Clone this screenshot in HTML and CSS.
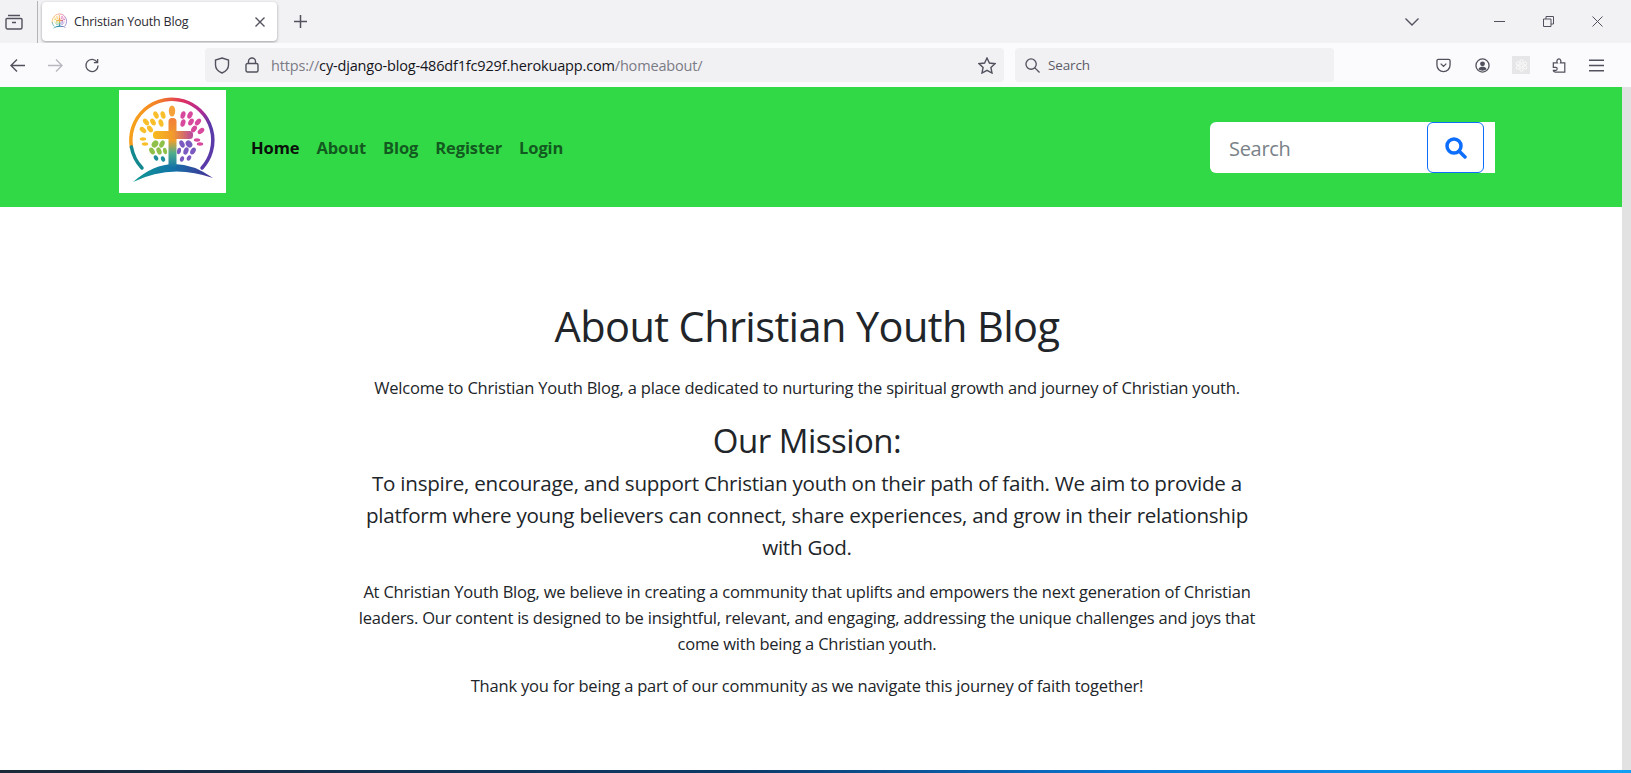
FILE: index.html
```html
<!DOCTYPE html>
<html lang="en">
<head>
  <meta charset="UTF-8" />
  <title>Christian Youth Blog</title>
  <link rel="stylesheet" href="styles.css">
</head>
<body>

  <!-- shared logo, used by the tab favicon and the navbar -->
  <svg class="defs" aria-hidden="true">
    <defs>
      <linearGradient id="ring" x1="0" y1="0" x2="1" y2="0.25">
        <stop offset="0" stop-color="#f8b514"/>
        <stop offset="0.35" stop-color="#f2792a"/>
        <stop offset="0.6" stop-color="#dd2f62"/>
        <stop offset="0.85" stop-color="#b02a95"/>
        <stop offset="1" stop-color="#5a3aa8"/>
      </linearGradient>
      <linearGradient id="ground" x1="0" y1="0" x2="1" y2="0">
        <stop offset="0" stop-color="#109a92"/>
        <stop offset="0.5" stop-color="#1272a8"/>
        <stop offset="1" stop-color="#4a2c96"/>
      </linearGradient>
      <linearGradient id="crossV" x1="0" y1="0" x2="0" y2="1">
        <stop offset="0" stop-color="#f2803a"/>
        <stop offset="0.45" stop-color="#f0a02c"/>
        <stop offset="0.7" stop-color="#4fae8a"/>
        <stop offset="1" stop-color="#1272a8"/>
      </linearGradient>
      <linearGradient id="crossH" x1="0" y1="0" x2="1" y2="0">
        <stop offset="0" stop-color="#f7bb1e"/>
        <stop offset="0.5" stop-color="#f29a2c"/>
        <stop offset="1" stop-color="#b8479f"/>
      </linearGradient>
      <symbol id="logo" viewBox="0 0 107 103">
        <path class="ring" d="M12.400 57A41 41 0 1 1 83 78"/>
        <path class="ring-low" d="M23 78A41 41 0 0 1 12.400 57"/>
        <path fill="url(#ground)" d="M14 92Q52 58 94 88Q52 73 14 92Z"/>
        <ellipse cx="53" cy="21" rx="3.200" ry="5.500" fill="#f6a23a"/>
        <g fill="#f9bf2a">
          <ellipse cx="37" cy="25" rx="2.400" ry="3.800" transform="rotate(-25 37 25)"/>
          <ellipse cx="44" cy="25" rx="2.400" ry="3.800" transform="rotate(-15 44 25)"/>
          <ellipse cx="27" cy="32" rx="2.400" ry="3.800" transform="rotate(-40 27 32)"/>
          <ellipse cx="34" cy="32" rx="2.400" ry="3.800" transform="rotate(-30 34 32)"/>
          <ellipse cx="42" cy="33" rx="2.400" ry="3.800" transform="rotate(-15 42 33)"/>
          <ellipse cx="24" cy="40" rx="2.400" ry="3.800" transform="rotate(-50 24 40)"/>
          <ellipse cx="31" cy="39" rx="2.400" ry="3.800" transform="rotate(-35 31 39)"/>
          <ellipse cx="24" cy="49" rx="3.200" ry="1.700"/>
          <ellipse cx="26" cy="54" rx="3.200" ry="1.700"/>
        </g>
        <g fill="#d8489c">
          <ellipse cx="64" cy="25" rx="2.400" ry="3.800" transform="rotate(15 64 25)"/>
          <ellipse cx="71" cy="25" rx="2.400" ry="3.800" transform="rotate(25 71 25)"/>
          <ellipse cx="64" cy="33" rx="2.400" ry="3.800" transform="rotate(15 64 33)"/>
          <ellipse cx="72" cy="32" rx="2.400" ry="3.800" transform="rotate(30 72 32)"/>
          <ellipse cx="79" cy="32" rx="2.400" ry="3.800" transform="rotate(40 79 32)"/>
          <ellipse cx="75" cy="39" rx="2.400" ry="3.800" transform="rotate(35 75 39)"/>
          <ellipse cx="82" cy="41" rx="2.400" ry="3.800" transform="rotate(50 82 41)"/>
          <ellipse cx="78" cy="50" rx="3.200" ry="1.700"/>
          <ellipse cx="81" cy="54" rx="3.200" ry="1.700"/>
        </g>
        <g fill="#8fc04a">
          <ellipse cx="36" cy="54" rx="3" ry="3.800" transform="rotate(40 36 54)"/>
          <ellipse cx="43" cy="54" rx="2.400" ry="3.800" transform="rotate(25 43 54)"/>
          <ellipse cx="33" cy="61" rx="2.400" ry="3.800" transform="rotate(-30 33 61)"/>
          <ellipse cx="40" cy="61" rx="2.400" ry="3.800" transform="rotate(-20 40 61)"/>
          <ellipse cx="46" cy="61" rx="2" ry="3.200" transform="rotate(-10 46 61)"/>
        </g>
        <g fill="#1d8e9a">
          <ellipse cx="37" cy="68" rx="2" ry="2.800" transform="rotate(-30 37 68)"/>
          <ellipse cx="44" cy="69" rx="2" ry="2.800" transform="rotate(-20 44 69)"/>
        </g>
        <g fill="#7a5ac0">
          <ellipse cx="63" cy="54" rx="2.400" ry="3.800" transform="rotate(-25 63 54)"/>
          <ellipse cx="70" cy="54" rx="3" ry="3.800" transform="rotate(-40 70 54)"/>
          <ellipse cx="60" cy="61" rx="2" ry="3.200" transform="rotate(10 60 61)"/>
          <ellipse cx="67" cy="61" rx="2.400" ry="3.800" transform="rotate(20 67 61)"/>
          <ellipse cx="74" cy="61" rx="2.400" ry="3.800" transform="rotate(30 74 61)"/>
          <ellipse cx="63" cy="69" rx="2" ry="2.800" transform="rotate(20 63 69)"/>
          <ellipse cx="70" cy="68" rx="2" ry="2.800" transform="rotate(30 70 68)"/>
        </g>
        <rect x="49.500" y="28" width="8" height="50" rx="3.500" fill="url(#crossV)"/>
        <rect x="34" y="41" width="40" height="8" rx="3.500" fill="url(#crossH)"/>
      </symbol>
    </defs>
  </svg>

  <div class="tabbar">
    <svg class="ico tabs-ico" viewBox="0 0 18 16"><path d="M3 1.500h12M2 4.500h14a1 1 0 0 1 1 1v8a1.500 1.500 0 0 1-1.500 1.500h-13A1.500 1.500 0 0 1 1 13.500v-8a1 1 0 0 1 1-1zM7 8.500h4"/></svg>
    <div class="tab-sep"></div>
    <div class="tab">
      <svg class="favicon"><use href="#logo"/></svg>
      <span class="tab-title">Christian Youth Blog</span>
      <svg class="ico tab-close" viewBox="0 0 10 10"><path d="M.5.500l9 9M9.500.500l-9 9"/></svg>
    </div>
    <svg class="ico tab-new" viewBox="0 0 12 12"><path d="M6 0v12M0 6h12"/></svg>
    <div class="spacer"></div>
    <svg class="ico list-tabs" viewBox="0 0 14 8"><path d="M.5.500L7 7l6.500-6.500"/></svg>
    <div class="win-btns">
      <svg class="ico win-btn" viewBox="0 0 11 11"><path d="M0 5.500h11"/></svg>
      <svg class="ico win-btn" viewBox="0 0 11 11"><path d="M.5 3h7.500v7.500H.5zM3 3V.5h7.500V8H8"/></svg>
      <svg class="ico win-btn" viewBox="0 0 11 11"><path d="M.5.500l10 10M10.500.500l-10 10"/></svg>
    </div>
  </div>

  <div class="toolbar">
    <svg class="ico nav-ico" viewBox="0 0 16 14"><path d="M15 7H1.500M7 1L1 7l6 6"/></svg>
    <svg class="ico nav-ico dim" viewBox="0 0 16 14"><path d="M1 7h13.500M9 1l6 6-6 6"/></svg>
    <svg class="ico nav-ico" viewBox="0 0 16 16"><path d="M13.500 4.500A6.500 6.500 0 1 0 14.500 8M14 1v4h-4"/></svg>
    <div class="urlbar">
      <svg class="ico shield" viewBox="0 0 16 17"><path d="M8 1l6.500 2v5c0 4-3 6.500-6.500 8-3.500-1.500-6.500-4-6.500-8V3z"/></svg>
      <svg class="ico lock" viewBox="0 0 14 16"><path d="M2.500 6.500h9a1.500 1.500 0 0 1 1.500 1.500v5.500a1.500 1.500 0 0 1-1.500 1.500h-9A1.500 1.500 0 0 1 1 13.500V8a1.500 1.500 0 0 1 1.500-1.500zM3.500 6.500V4.500a3.500 3.500 0 0 1 7 0v2"/></svg>
      <span class="url"><span class="url-dim">https://</span>cy-django-blog-486df1fc929f.herokuapp.com<span class="url-dim">/homeabout/</span></span>
      <div class="spacer"></div>
      <svg class="ico star" viewBox="0 0 18 17"><path d="M9 1l2.400 5 5.600.7-4.100 3.800 1.100 5.500L9 13.300 4 16l1.100-5.500L1 6.700 6.600 6z"/></svg>
    </div>
    <div class="searchbar">
      <svg class="ico mag" viewBox="0 0 16 16"><circle cx="6.500" cy="6.500" r="5.500"/><path d="M10.500 10.500L15.500 15.500"/></svg>
      <span>Search</span>
    </div>
    <div class="tool-icons">
      <svg class="ico tool" viewBox="0 0 16 16"><path d="M2.500 1.500h11A1.500 1.500 0 0 1 15 3v4.500a7 7 0 0 1-14 0V3a1.500 1.500 0 0 1 1.500-1.500zM5 6l3 3 3-3"/></svg>
      <svg class="ico tool" viewBox="0 0 16 16"><circle cx="8" cy="8" r="7"/><circle class="solid" cx="8" cy="6.200" r="2.600"/><path class="solid" d="M3.500 12c1-2 2.500-2.600 4.500-2.600s3.500.6 4.500 2.600c-1.200 1-2.800 1.500-4.500 1.500s-3.300-.5-4.500-1.500z"/></svg>
      <div class="ext-tile">
        <svg class="ico ext-flower" viewBox="0 0 16 16"><circle cx="8" cy="8" r="2"/><circle cx="8" cy="3" r="2"/><circle cx="8" cy="13" r="2"/><circle cx="3.500" cy="5.500" r="2"/><circle cx="12.500" cy="5.500" r="2"/><circle cx="3.500" cy="10.500" r="2"/><circle cx="12.500" cy="10.500" r="2"/></svg>
      </div>
      <svg class="ico tool" viewBox="0 0 16 17"><path d="M1 5.500h4.500c-1-1.500-.5-4 1.700-4.500 2-.2 3 2.500 2 4.500H14V16H3.500c-1.500 0-2.500-1-2.500-2h3c1.800 0 1.800-3.500 0-3.500H1z"/></svg>
      <svg class="ico tool" viewBox="0 0 14 12"><path d="M0 1h14M0 6h14M0 11h14"/></svg>
    </div>
  </div>

  <div class="viewport">
    <div class="page">
      <nav class="navbar">
        <div class="brand"><svg class="brand-logo"><use href="#logo"/></svg></div>
        <ul class="nav-links">
          <li><a class="active" href="#">Home</a></li>
          <li><a href="#">About</a></li>
          <li><a href="#">Blog</a></li>
          <li><a href="#">Register</a></li>
          <li><a href="#">Login</a></li>
        </ul>
        <form class="search-form">
          <input class="search-input" type="text" placeholder="Search" />
          <button class="search-btn" type="button">
            <svg viewBox="0 0 22 22"><circle cx="9" cy="9" r="7"/><path d="M14.500 14.500L20 20"/></svg>
          </button>
        </form>
      </nav>

      <main class="about">
        <h1>About Christian Youth Blog</h1>
        <p>Welcome to Christian Youth Blog, a place dedicated to nurturing the spiritual growth and journey of Christian youth.</p>
        <h3>Our Mission:</h3>
        <p class="lead">To inspire, encourage, and support Christian youth on their path of faith. We aim to provide a platform where young believers can connect, share experiences, and grow in their relationship with God.</p>
        <p>At Christian Youth Blog, we believe in creating a community that uplifts and empowers the next generation of Christian leaders. Our content is designed to be insightful, relevant, and engaging, addressing the unique challenges and joys that come with being a Christian youth.</p>
        <p>Thank you for being a part of our community as we navigate this journey of faith together!</p>
      </main>
    </div>
    <div class="scrollbar"></div>
  </div>

  <div class="taskbar"></div>

</body>
</html>
```

FILE: styles.css
```css
* {
  box-sizing: border-box;
}

html, body {
  height: 100%;
}

body {
  margin: 0;
  display: flex;
  flex-direction: column;
  overflow: hidden;
  font-family: "Open Sans", "Noto Sans", sans-serif;
  color: #212529;
  background: #fff;
}

.defs {
  width: 0;
  height: 0;
  position: absolute;
}

.ring {
  fill: none;
  stroke: url(#ring);
  stroke-width: 3.500;
  stroke-linecap: round;
}

.ring-low {
  fill: none;
  stroke: #14888f;
  stroke-width: 3.500;
  stroke-linecap: round;
}

.spacer {
  flex: 1;
}

.ico {
  fill: none;
  stroke: #52525e;
  stroke-width: 1.4;
  flex: none;
}

/* browser tabs */
.tabbar {
  height: 43px;
  background: #f2f2f5;
  display: flex;
  align-items: center;
  padding-right: 28px;
  flex: none;
}

.tabs-ico {
  width: 18px;
  height: 16px;
  margin-left: 5px;
}

.tab-sep {
  width: 1px;
  height: 42px;
  background: #b4b4b8;
  margin-left: 14px;
}

.tab {
  width: 235px;
  height: 39px;
  margin-left: 4px;
  background: #fff;
  border-radius: 4px;
  box-shadow: 0 1px 3px rgba(0, 0, 0, 0.35);
  display: flex;
  align-items: center;
  padding: 0 12px 0 8px;
}

.favicon {
  width: 19px;
  height: 19px;
  opacity: 0.85;
  flex: none;
}

.tab-title {
  font-size: 12.500px;
  margin-left: 5px;
  flex: 1;
  letter-spacing: -0.2px;
  color: #2b2a33;
}

.tab-close {
  width: 10px;
  height: 10px;
}

.tab-new {
  width: 13px;
  height: 13px;
  margin-left: 17px;
}

.list-tabs {
  width: 14px;
  height: 8px;
}

.win-btns {
  display: flex;
  gap: 38px;
  margin-left: 75px;
}

.win-btn {
  width: 11px;
  height: 11px;
  stroke-width: 1;
}

/* browser toolbar */
.toolbar {
  height: 44px;
  background: #fbfbfd;
  display: flex;
  align-items: center;
  padding-left: 10px;
  flex: none;
}

.nav-ico {
  width: 16px;
  height: 15px;
  margin-right: 21px;
}

.nav-ico.dim {
  stroke: #b8b8c0;
}

.urlbar {
  width: 799px;
  height: 34px;
  margin-left: 84px;
  background: #f1f1f4;
  border-radius: 4px;
  display: flex;
  align-items: center;
  padding: 0 8px 0 9px;
  font-size: 14.500px;
}

.shield {
  width: 16px;
  height: 17px;
}

.lock {
  width: 14px;
  height: 16px;
  margin-left: 15px;
}

.url {
  margin-left: 12px;
  letter-spacing: -0.17px;
  color: #15141a;
}

.url-dim {
  color: #7b7b84;
}

.star {
  width: 18px;
  height: 17px;
}

.searchbar {
  width: 319px;
  height: 34px;
  margin-left: 11px;
  background: #f1f1f4;
  border-radius: 4px;
  display: flex;
  align-items: center;
  padding-left: 10px;
  gap: 8px;
  font-size: 13.500px;
  letter-spacing: -0.15px;
  color: #5b5b66;
}

.mag {
  width: 15px;
  height: 15px;
}

.tool-icons {
  display: flex;
  align-items: center;
  margin-left: 102px;
  gap: 22px;
}

.tool {
  width: 15px;
  height: 15px;
}

.tool:first-child {
  margin-right: 2px;
}

.tool .solid {
  fill: #52525e;
  stroke: none;
}

.ext-tile {
  width: 18px;
  height: 18px;
  background: #e6e6e8;
  display: flex;
  align-items: center;
  justify-content: center;
}

.ext-flower {
  width: 13px;
  height: 13px;
  stroke: #fff;
  stroke-width: 1;
}

/* page inside the window */
.viewport {
  flex: 1;
  display: flex;
  min-height: 0;
}

.page {
  flex: 1;
  min-width: 0;
}

.scrollbar {
  width: 9px;
  background: #e2e2e2;
}

.taskbar {
  height: 3px;
  flex: none;
  background: linear-gradient(to right, #1a2a3a, #0b3a66 45%, #0a78d6 70%, #12a0f5);
}

.navbar {
  height: 120px;
  background: #32d946;
  display: flex;
  align-items: flex-start;
  padding: 3px 0 0 119px;
}

.brand {
  width: 107px;
  height: 103px;
  background: #fff;
  flex: none;
}

.brand-logo {
  width: 107px;
  height: 103px;
  display: block;
}

.nav-links {
  list-style: none;
  margin: 0 0 0 25px;
  padding: 0;
  display: flex;
  gap: 17px;
  height: 115px;
  align-items: center;
}

.nav-links a {
  font-size: 16.500px;
  font-weight: 700;
  letter-spacing: -0.1px;
  color: #125a20;
  text-decoration: none;
}

.nav-links a.active {
  color: #0a0f0a;
}

.search-form {
  width: 285px;
  height: 51px;
  margin: 32px 127px 0 auto;
  background: #fff;
  border-radius: 6px 0 0 6px;
  display: flex;
  padding-right: 11px;
}

.search-input {
  flex: 1;
  min-width: 0;
  border: 0;
  background: none;
  padding: 2px 18px 0 19px;
  font-family: inherit;
  font-size: 20px;
  letter-spacing: -0.3px;
  color: #212529;
}

.search-input::placeholder {
  color: #7a8288;
  opacity: 1;
}

.search-btn {
  width: 57px;
  height: 51px;
  border: 1px solid #0d6efd;
  border-radius: 6px;
  background: #fff;
  display: flex;
  align-items: center;
  justify-content: center;
  padding: 0;
}

.search-btn svg {
  width: 22px;
  height: 22px;
  fill: none;
  stroke: #0d6efd;
  stroke-width: 3.500;
  stroke-linecap: round;
}

.about {
  width: 914px;
  margin: 0 auto;
  padding-top: 93px;
  position: relative;
  left: -4px;
  text-align: center;
}

.about h1 {
  font-size: 41.500px;
  font-weight: 400;
  line-height: 52px;
  letter-spacing: -0.6px;
  margin: 0 0 23px;
}

.about h3 {
  font-size: 33px;
  font-weight: 400;
  line-height: 40px;
  letter-spacing: -0.5px;
  margin: 20px 0 6px;
}

.about p {
  font-size: 16.500px;
  line-height: 26px;
  letter-spacing: -0.2px;
  margin: 0 0 16px;
}

.about p.lead {
  font-size: 20.600px;
  line-height: 32px;
  letter-spacing: -0.25px;
  margin-bottom: 16px;
}
```
